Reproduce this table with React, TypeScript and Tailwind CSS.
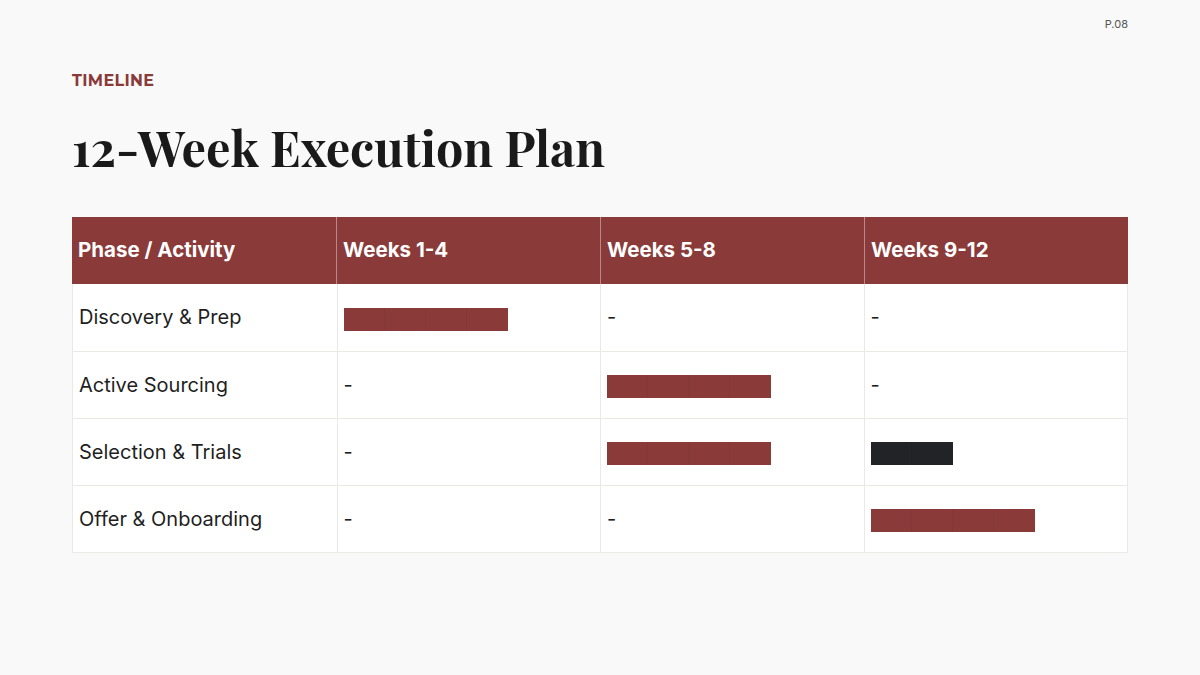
const RED = 'bg-[#8b3a3a]';

type Cell = null | { span: number; dark?: boolean };

const rows: { name: string; cells: Cell[] }[] = [
  { name: 'Discovery & Prep', cells: [{ span: 4 }, null, null] },
  { name: 'Active Sourcing', cells: [null, { span: 4 }, null] },
  { name: 'Selection & Trials', cells: [null, { span: 4 }, { span: 2, dark: true }] },
  { name: 'Offer & Onboarding', cells: [null, null, { span: 4 }] },
];

function Bar({ span, dark }: { span: number; dark?: boolean }) {
  // bar is drawn as block segments, like the original
  return (
    <div className="flex h-[23px] mt-[4px]">
      {Array.from({ length: span }).map((_, i) => (
        <div
          key={i}
          className={`w-[41px] h-full ${dark ? 'bg-[#222326]' : RED} border-r border-black/[0.03] last:border-r-0`}
        />
      ))}
    </div>
  );
}

export default function App() {
  return (
    <div className="w-[1200px] h-[675px] bg-[#f9f9f9] font-['Inter',sans-serif] text-[#1f1f1f] relative overflow-hidden">
      <div className="absolute right-[72px] top-[16px] text-[11px] text-[#555]">P.08</div>

      <div className="px-[72px] pt-[73px]">
        <div className="text-[16px] font-bold tracking-[0.02em] text-[#8b3a3a] leading-none font-['Montserrat','Inter',sans-serif]">
          TIMELINE
        </div>
        <h1 className="mt-[34px] font-['Playfair_Display','DejaVu_Serif',serif] font-bold text-[48.5px] leading-none text-[#1a1a1a]">
          12-Week Execution Plan
        </h1>

        <div className="mt-[45px] w-[1056px]">
          <div className={`grid grid-cols-4 h-[67px] ${RED}`}>
            {['Phase / Activity', 'Weeks 1-4', 'Weeks 5-8', 'Weeks 9-12'].map((h, i) => (
              <div
                key={h}
                className={`flex items-center px-[6px] text-white font-bold text-[20.5px] border-white/40 ${i > 0 ? 'border-l' : ''}`}
              >
                {h}
              </div>
            ))}
          </div>
          <div className="bg-white border-x border-b border-[#ebe9e6]">
            {rows.map((r, ri) => (
              <div
                key={r.name}
                className={`grid grid-cols-4 h-[67px] ${ri > 0 ? 'border-t border-[#ebe9e6]' : ''}`}
              >
                <div className="flex items-center px-[6px] text-[20px]">{r.name}</div>
                {r.cells.map((c, ci) => (
                  <div key={ci} className="flex items-center px-[6px] border-l border-[#ebe9e6] text-[20px]">
                    {c ? <Bar span={c.span} dark={c.dark} /> : '-'}
                  </div>
                ))}
              </div>
            ))}
          </div>
        </div>
      </div>
    </div>
  );
}
